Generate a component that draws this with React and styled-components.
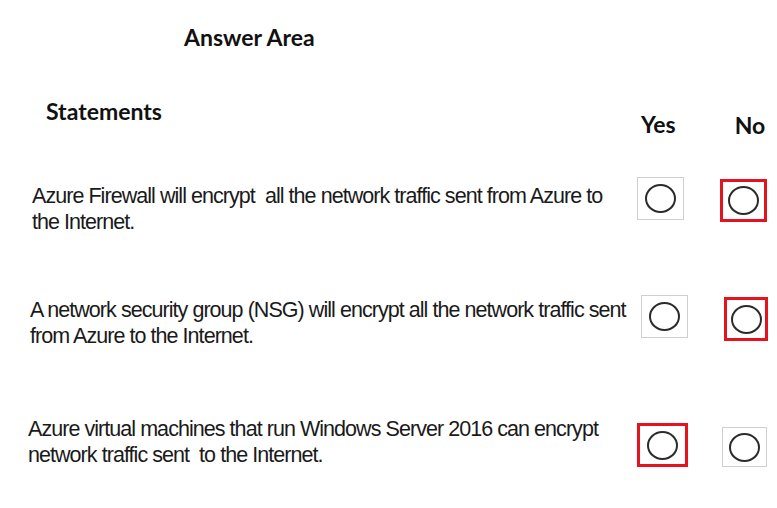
import styled, { createGlobalStyle } from 'styled-components'

const GlobalStyle = createGlobalStyle`
	html, body {
		margin: 0;
		padding: 0;
		background: #ffffff;
	}
	body {
		width: 777px;
		height: 508px;
		overflow: hidden;
	}
`

const Page = styled.div`
	display: flex;
	flex-direction: column;
	width: 777px;
	height: 508px;
	padding-top: 23px;
	box-sizing: border-box;
	color: #111;
`

const Heading = styled.div`
	font-family: Lato, 'Open Sans', sans-serif;
	font-weight: 700;
	font-size: 23px;
	line-height: 28px;
	margin-left: ${p => p.$left}px;
	margin-top: ${p => p.$top || 0}px;
`

const HeaderRow = styled.div`
	display: flex;
	align-items: flex-start;
	margin-top: 42px;
	height: 72px;
`

const Statement = styled.div`
	display: flex;
	align-items: flex-start;
	height: ${p => p.$height}px;
`

const Text = styled.p`
	margin: ${p => p.$top}px 0 0 ${p => p.$left}px;
	width: ${p => p.$width}px;
	font-family: 'Liberation Sans', Arial, sans-serif;
	font-size: 21.5px;
	line-height: 25.5px;
	letter-spacing: -0.95px;
	color: #1a1a1a;
`

const Choice = styled.div`
	display: flex;
	align-items: center;
	justify-content: center;
	box-sizing: border-box;
	width: ${p => p.$w}px;
	height: ${p => p.$h}px;
	margin-left: ${p => p.$gap}px;
	margin-top: ${p => p.$top}px;
	border: ${p => (p.$picked ? '3px solid #e3141f' : '1px solid #cfcfcf')};
`

const Radio = styled.span`
	display: block;
	width: 27px;
	height: 25px;
	border: 2px solid #2b2b2b;
	border-radius: 50%;
`

export default function App() {
	return (
		<Page>
			<GlobalStyle />
			<Heading $left={184}>Answer Area</Heading>
			<HeaderRow>
				<Heading $left={46} $top={4}>Statements</Heading>
				<Heading $left={479} $top={17}>Yes</Heading>
				<Heading $left={59} $top={18}>No</Heading>
			</HeaderRow>
			<Statement $height={118}>
				<Text $left={32} $top={19} $width={585}>
					Azure Firewall will encrypt&nbsp; all the network traffic sent from Azure to the Internet.
				</Text>
				<Choice $gap={20} $top={12} $w={47} $h={43}><Radio /></Choice>
				<Choice $gap={36} $top={14} $w={47} $h={43} $picked><Radio /></Choice>
			</Statement>
			<Statement $height={128}>
				<Text $left={30} $top={15} $width={611}>
					A network security group (NSG) will encrypt all the network traffic sent from Azure to the Internet.
				</Text>
				<Choice $gap={0} $top={12} $w={47} $h={43}><Radio /></Choice>
				<Choice $gap={36} $top={14} $w={44} $h={44} $picked><Radio /></Choice>
			</Statement>
			<Statement $height={90}>
				<Text $left={28} $top={6} $width={609}>
					Azure virtual machines that run Windows Server 2016 can encrypt network traffic sent&nbsp; to the Internet.
				</Text>
				<Choice $gap={0} $top={12} $w={51} $h={44} $picked><Radio /></Choice>
				<Choice $gap={34} $top={16} $w={45} $h={40}><Radio /></Choice>
			</Statement>
		</Page>
	)
}
